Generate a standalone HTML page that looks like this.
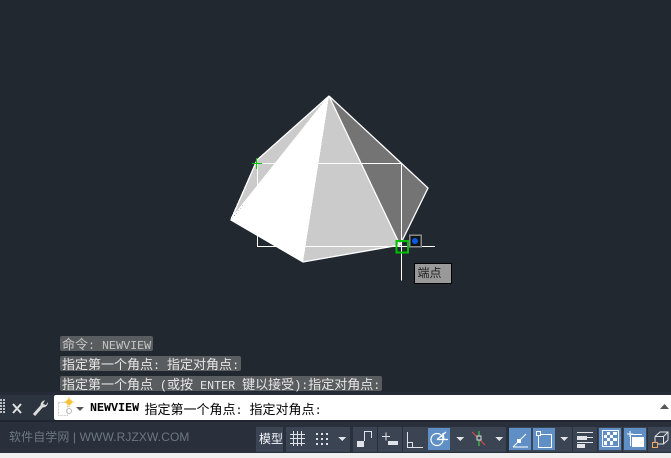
<!DOCTYPE html>
<html><head><meta charset="utf-8">
<style>
html,body{margin:0;padding:0;background:#212830;}
body{width:671px;height:458px;position:relative;overflow:hidden;font-family:"Liberation Sans","Noto Sans CJK SC",sans-serif;}
.abs{position:absolute;}
.hist{position:absolute;left:60px;height:15px;line-height:15px;background:#5a5d5f;border-radius:2px;color:#e6e6e6;font:11.7px/15px "Liberation Mono","Noto Sans CJK SC",monospace;padding:0 1.5px 0 2px;white-space:pre;}
.c{font-size:13px;font-family:"Noto Sans CJK SC",sans-serif;line-height:15px;}
.seg{position:absolute;top:427px;height:25px;background:#3b4453;}
.on{position:absolute;top:428px;height:22px;background:#5f8fc4;}
svg{position:absolute;left:0;top:0;}
</style></head><body>
<svg width="671" height="458" viewBox="0 0 671 458" shape-rendering="crispEdges">
<polygon points="329,96 231,219 257,160" fill="#cbcbcb" stroke="#fff" stroke-width="1"/>
<polygon points="329,96 400,245 428,188" fill="#747474"/>
<polygon points="329,96 303,262 400,245" fill="#cbcbcb"/>
<polygon points="329,96 231,220 303,262" fill="#fff"/>
<polyline points="329,96 428,188 400,245 303,262 231,220 257,160 329,96" fill="none" stroke="#fff" stroke-width="1.3" shape-rendering="auto"/>
<line x1="329" y1="96" x2="400" y2="245" stroke="#fff" stroke-width="1.3" shape-rendering="auto"/>
<path d="M257.5 163.5H401.5V280.5M257.5 163.5V246.5H435" fill="none" stroke="#fff" stroke-width="1"/>
<path d="M252 163.500H262M256.500 158V169" stroke="#00c800" stroke-width="1"/>
<rect x="396.500" y="241" width="11.500" height="11.500" fill="none" stroke="#00c000" stroke-width="2"/>
<rect x="409.500" y="235" width="11.500" height="11.500" fill="#101418" stroke="#8a8a8a" stroke-width="1.500"/>
<circle cx="415" cy="241" r="3" fill="#0a5be0" shape-rendering="auto"/>
</svg>
<div class="abs" style="left:413.500px;top:262.500px;width:33px;height:19px;background:#999;border:1px solid #000;color:#222;font-size:12px;line-height:19px;padding-left:3px;">端点</div>

<div class="hist" style="top:336px;color:#c6c6c6;"><span class="c">命令</span>: NEWVIEW</div>
<div class="hist" style="top:356px;"><span class="c">指定第一个角点</span>: <span class="c">指定对角点</span>:</div>
<div class="hist" style="top:376px;"><span class="c">指定第一个角点</span> (<span class="c">或按</span> ENTER <span class="c">键以接受</span>):<span class="c">指定对角点</span>:</div>

<div class="abs" style="left:0;top:392px;width:671px;height:3px;background:#252c37;"></div>
<div class="abs" style="left:0;top:395px;width:671px;height:25px;background:#2c3440;"></div>
<div class="abs" style="left:0;top:420px;width:671px;height:2px;background:#1f2630;"></div>
<div class="abs" style="left:0;top:422px;width:671px;height:31px;background:#29303c;"></div>
<div class="abs" style="left:0;top:453px;width:671px;height:5px;background:#f0f0f0;"></div>
<div class="abs" style="left:54px;top:395px;width:617px;height:25px;background:#fff;border-radius:2px 0 0 2px;"></div>

<svg width="671" height="458" viewBox="0 0 671 458">
<g fill="#b9bec4"><rect x="0" y="399" width="2" height="2"/><rect x="3" y="399" width="2" height="2"/><rect x="0" y="402" width="2" height="2"/><rect x="3" y="402" width="2" height="2"/><rect x="0" y="405" width="2" height="2"/><rect x="3" y="405" width="2" height="2"/><rect x="0" y="408" width="2" height="2"/><rect x="3" y="408" width="2" height="2"/><rect x="0" y="411" width="2" height="2"/><rect x="3" y="411" width="2" height="2"/></g>
<path d="M13 404L21 413M21 404L13 413" stroke="#e0e0e0" stroke-width="2"/>
<path d="M34 415L42 406" stroke="#dcdcdc" stroke-width="3"/>
<path d="M41 407A4.500 4.500 0 0 1 43 401L45 400L43 404L46 405L48 402A5 5 0 0 1 41 407Z" fill="#dcdcdc"/>
<rect x="58.500" y="402.500" width="9" height="13" fill="none" stroke="#ccc" stroke-dasharray="2 1"/>
<circle cx="69" cy="402" r="3" fill="#f5c33b"/>
<path d="M69 397V407M64 402H74" stroke="#f5c33b" stroke-width="1"/>
<circle cx="69" cy="411" r="2.500" fill="none" stroke="#bbb"/>
<path d="M76 407h8l-4 4z" fill="#555"/>
<path d="M660 409h9l-4.500 -5z" fill="#555"/>
</svg>
<div class="abs" style="left:90px;top:395px;height:25px;font:bold 11.700px/27px 'Liberation Mono',monospace;color:#000;white-space:pre;">NEWVIEW</div>
<div class="abs" style="left:144.500px;top:395px;height:25px;font:11.700px/27px 'Liberation Mono','Noto Sans CJK SC',monospace;color:#000;white-space:pre;"><span style="font-size:13px;font-family:'Noto Sans CJK SC',sans-serif;line-height:27px;">指定第一个角点</span>: <span style="font-size:13px;font-family:'Noto Sans CJK SC',sans-serif;line-height:27px;">指定对角点</span>:</div>
<div class="abs" style="left:9px;top:430px;font-size:12px;line-height:15px;letter-spacing:.1px;color:#6d7781;white-space:pre;">软件自学网 | WWW.RJZXW.COM</div>

<div class="seg" style="left:256px;width:27px;"></div>
<div class="seg" style="left:286px;width:64px;"></div>
<div class="seg" style="left:353px;width:24px;"></div>
<div class="seg" style="left:378px;width:24px;"></div>
<div class="seg" style="left:403px;width:103px;"></div>
<div class="seg" style="left:509px;width:63px;"></div>
<div class="seg" style="left:573px;width:24px;"></div>
<div class="seg" style="left:598px;width:24px;"></div>
<div class="seg" style="left:623px;width:24px;"></div>
<div class="seg" style="left:648px;width:23px;"></div>
<div class="on" style="left:428px;width:22px;"></div>
<div class="on" style="left:509px;width:22px;"></div>
<div class="on" style="left:533px;width:22px;"></div>
<div class="on" style="left:599px;width:22px;"></div>
<div class="on" style="left:624px;width:22px;"></div>
<div class="abs" style="left:259px;top:431px;font-size:12px;line-height:16px;color:#f4f8fc;white-space:pre;">模型</div>

<svg width="671" height="458" viewBox="0 0 671 458" fill="none" shape-rendering="crispEdges">
<path d="M290 434.500H305M290 438.500H305M290 443.500H305M293.500 431V446M297.500 431V446M301.500 431V446" stroke="#dfe3e8"/>
<g fill="#dfe3e8"><rect x="316" y="433" width="2" height="2"/><rect x="321" y="433" width="2" height="2"/><rect x="326" y="433" width="2" height="2"/><rect x="316" y="438" width="2" height="2"/><rect x="321" y="438" width="2" height="2"/><rect x="326" y="438" width="2" height="2"/><rect x="316" y="443" width="2" height="2"/><rect x="321" y="443" width="2" height="2"/><rect x="326" y="443" width="2" height="2"/></g>
<path d="M338 437h8l-4 4z" fill="#dfe3e8"/>
<rect x="357" y="441" width="7" height="6" fill="#dfe3e8"/>
<path d="M364.500 441V431.500H371.500V438" stroke="#dfe3e8"/>
<path d="M382 436.500H390M386 432.500V440.500" stroke="#dfe3e8"/>
<rect x="388" y="441" width="10" height="4" fill="#dfe3e8"/>
<path d="M407.500 432V447.500H423M407.500 442.500H412.500V447.500" stroke="#dfe3e8"/>
<g shape-rendering="auto" stroke="#fff" stroke-width="1.200"><circle cx="437" cy="439.500" r="6"/><path d="M437 439.500L446 432M437 439.500H448M443 433L444 439.500"/></g>
<path d="M456 437h8l-4 4z" fill="#dfe3e8"/>
<g shape-rendering="auto"><path d="M472 432L485 445" stroke="#d44a4a" stroke-width="1.200"/><path d="M479 431V446" stroke="#3fc24a" stroke-width="1.200"/><rect x="477" y="436" width="4" height="4" fill="#3b4453" stroke="#ddd"/></g>
<path d="M495 437h8l-4 4z" fill="#dfe3e8"/>
<path d="M513 447H528M513 447L526 434" stroke="#fff" stroke-width="1" shape-rendering="auto"/>
<rect x="517" y="439" width="4" height="4" fill="#fff"/>
<rect x="538.500" y="434.500" width="13" height="13" stroke="#fff"/>
<rect x="536.500" y="431.500" width="4" height="4" fill="#5f8fc4" stroke="#fff"/>
<path d="M560 437h8l-4 4z" fill="#dfe3e8"/>
<g fill="#dfe3e8"><rect x="577" y="432" width="16" height="1"/><rect x="577" y="436" width="10" height="4"/><rect x="587" y="437" width="6" height="1"/><rect x="577" y="442" width="16" height="1"/><rect x="577" y="444" width="8" height="4"/></g>
<rect x="602" y="430" width="17" height="17" fill="#fff"/>
<rect x="603" y="431" width="15" height="15" fill="#5f8fc4"/>
<rect x="604" y="432" width="13" height="13" fill="#fff"/>
<g fill="#5f8fc4"><rect x="604" y="432" width="3" height="3"/><rect x="610" y="432" width="3" height="3"/><rect x="607" y="435" width="3" height="3"/><rect x="613" y="435" width="4" height="3"/><rect x="604" y="438" width="3" height="3"/><rect x="610" y="438" width="3" height="3"/><rect x="607" y="441" width="3" height="4"/><rect x="613" y="441" width="4" height="4"/></g>
<path d="M627 434H633M630 431V437" stroke="#fff"/>
<path d="M631 434.500H642M630.500 435V446" stroke="#fff"/>
<rect x="632" y="437" width="12" height="10" fill="#fff"/>
<g shape-rendering="auto" stroke="#dfe3e8"><path d="M655 436.500L660 432H668V440L663.500 444H655M655 436.500H663.500V444M663.500 436.500L668 432M655 436.500V442"/></g>
<rect x="652.500" y="442.500" width="5" height="5" fill="#3b4453" stroke="#f0a868"/>
</svg>
</body></html>
